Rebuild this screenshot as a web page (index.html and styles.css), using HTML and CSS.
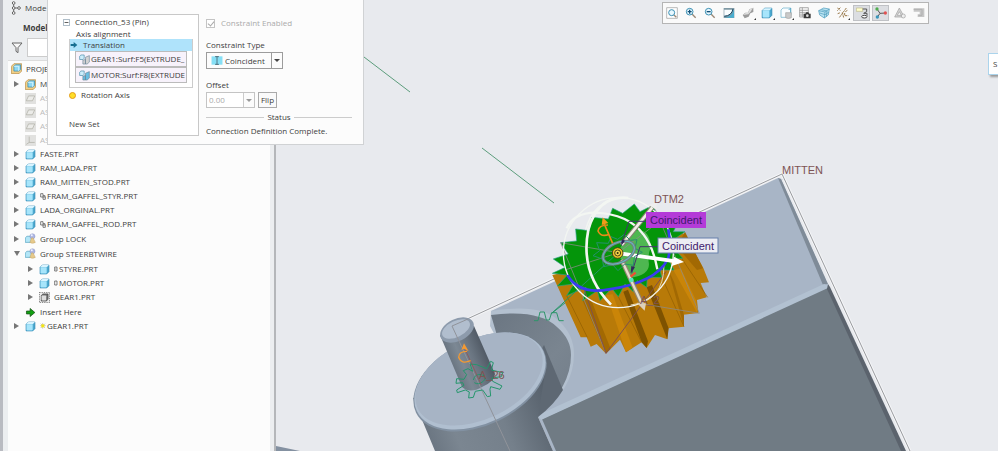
FILE: index.html
```
<!DOCTYPE html>
<html lang="en">
<head>
    <meta charset="utf-8">
    <title>Assembly - Component Placement</title>
    <link rel="stylesheet" href="styles.css">
</head>

<body>
<!-- Shared icons -->
<svg class="defs" aria-hidden="true">
    <symbol id="part" viewBox="0 0 30 30">
        <path d="M3 9l6-6h18v18l-6 6H3z" fill="#4ba9cf" stroke="#2b86b3" stroke-width="2"/>
        <path d="M3 9l6-6h18l-6 6z" fill="#d9f4ff"/>
        <rect x="4" y="9" width="17" height="17" rx="2" fill="#a7e5fb"/>
    </symbol>
    <symbol id="asm" viewBox="0 0 30 30">
        <path d="M1 9l7-7h21v20l-7 7H1z" fill="#f2cf86" stroke="#b78d48" stroke-width="2"/>
        <path d="M8 9l4-4h14v13l-4 4H8z" fill="#8fd8f3" stroke="#3588ad" stroke-width="2"/>
        <path d="M8 9h13v13" fill="none" stroke="#e9fbff" stroke-width="2"/>
    </symbol>
    <symbol id="group" viewBox="0 0 34 34">
        <path d="M1 15l5-5h14v14l-4 5H1z" fill="#b3e6f7" stroke="#4d9fbd" stroke-width="2"/>
        <circle cx="23" cy="10" r="8" fill="#aeb7e4" stroke="#7781b3"/>
        <circle cx="21" cy="7" r="3" fill="#eef1ff"/>
        <path d="M20 15h5l7 14q-9 6-17 0z" fill="#e6c98b" stroke="#b08f4e"/>
    </symbol>
    <symbol id="plane" viewBox="0 0 34 34">
        <rect width="34" height="34" fill="#e1e1df"/>
        <path d="M11 9h19l-7 15H4z" fill="#ebebe8" stroke="#aaa99f" stroke-width="2"/>
    </symbol>
    <symbol id="csys" viewBox="0 0 34 34">
        <rect width="34" height="34" fill="#e1e1df"/>
        <path d="M13 5v18h17M13 23l-9 6" fill="none" stroke="#aaa99f" stroke-width="2"/>
    </symbol>
    <symbol id="ghost" viewBox="0 0 34 34">
        <rect x="1" y="1" width="32" height="32" fill="#eee" stroke="#333" stroke-width="2" stroke-dasharray="4 3"/>
        <path d="M7 11l5-5h16v16l-5 6H7z" fill="#777" stroke="#333" stroke-width="2"/>
        <rect x="8" y="11" width="14" height="15" rx="2" fill="#ddd"/>
    </symbol>
    <symbol id="surf" viewBox="0 0 34 32">
        <path d="M2 6l4-4h10v10l-4 4H2z" fill="#cdeefb" stroke="#4387a5" stroke-width="2"/>
        <path d="M12 18l8-2v14h-8zM20 9l12-5v20l-7 6h-5z" fill="currentColor" stroke="#6d8898" stroke-width="2"/>
    </symbol>
    <symbol id="zoomer" viewBox="0 0 36 36">
        <path d="M21 21l11 11" stroke="#9a8775" stroke-width="4"/>
        <circle cx="14" cy="14" r="10" fill="#e8f8ff" stroke="#3b8fb3" stroke-width="3"/>
    </symbol>
</svg>

<aside class="sidebar">
    <header class="side-head">
        <div class="tab">
            <svg class="tab-icon" viewBox="0 0 30 42" fill="#fff" stroke="#666" stroke-width="3">
                <path d="M8 6v30M8 21h14"/>
                <circle cx="8" cy="6" r="4"/><circle cx="8" cy="21" r="4"/><circle cx="8" cy="36" r="4"/><circle cx="24" cy="21" r="4"/>
            </svg>
            <span>Mode</span>
        </div>
        <h2>Model</h2>
        <div class="filter">
            <svg class="funnel" viewBox="0 0 34 36"><path d="M2 3h30L20 17v15l-6-4V17z" fill="#f7f7f7" stroke="#666" stroke-width="3"/></svg>
            <input type="text" aria-label="Filter">
        </div>
    </header>
    <ul class="tree">
        <li><div class="row root"><svg class="ico"><use href="#asm"/></svg><span>PROJE</span></div>
            <ul>
                <li><div class="row"><i class="tri"></i><svg class="ico"><use href="#asm"/></svg><span>M</span></div></li>
                <li><div class="row dim"><i class="tri none"></i><svg class="ico"><use href="#plane"/></svg><span>AS</span></div></li>
                <li><div class="row dim"><i class="tri none"></i><svg class="ico"><use href="#plane"/></svg><span>AS</span></div></li>
                <li><div class="row dim"><i class="tri none"></i><svg class="ico"><use href="#plane"/></svg><span>AS</span></div></li>
                <li><div class="row dim"><i class="tri none"></i><svg class="ico"><use href="#csys"/></svg><span>AS</span></div></li>
                <li><div class="row"><i class="tri"></i><svg class="ico"><use href="#part"/></svg><span>FASTE.PRT</span></div></li>
                <li><div class="row"><i class="tri"></i><svg class="ico"><use href="#part"/></svg><span>RAM_LADA.PRT</span></div></li>
                <li><div class="row"><i class="tri"></i><svg class="ico"><use href="#part"/></svg><span>RAM_MITTEN_STOD.PRT</span></div></li>
                <li><div class="row"><i class="tri"></i><svg class="ico"><use href="#part"/></svg><svg class="mark" viewBox="0 0 18 21"><path d="M2 2h7v10H2zM9 8h6v4M9 12h7v7H9z" fill="none" stroke="#444" stroke-width="2"/></svg><span>FRAM_GAFFEL_STYR.PRT</span></div></li>
                <li><div class="row"><i class="tri"></i><svg class="ico"><use href="#part"/></svg><span>LADA_ORGINAL.PRT</span></div></li>
                <li><div class="row"><i class="tri"></i><svg class="ico"><use href="#part"/></svg><svg class="mark" viewBox="0 0 18 21"><path d="M2 2h7v10H2zM9 8h6v4M9 12h7v7H9z" fill="none" stroke="#444" stroke-width="2"/></svg><span>FRAM_GAFFEL_ROD.PRT</span></div></li>
                <li><div class="row group"><i class="tri"></i><svg class="ico"><use href="#group"/></svg><span>Group LOCK</span></div></li>
                <li><div class="row group"><i class="tri open"></i><svg class="ico"><use href="#group"/></svg><span>Group STEERBTWIRE</span></div>
                    <ul>
                        <li><div class="row"><i class="tri"></i><svg class="ico"><use href="#part"/></svg><svg class="mark slim" viewBox="0 0 12 21"><path d="M2 3h7v12H2zM4 9h3" fill="none" stroke="#444" stroke-width="2"/></svg><span>STYRE.PRT</span></div></li>
                        <li><div class="row"><i class="tri"></i><svg class="ico"><use href="#part"/></svg><svg class="mark slim" viewBox="0 0 12 21"><path d="M2 3h7v12H2z" fill="none" stroke="#444" stroke-width="2"/></svg><span>MOTOR.PRT</span></div></li>
                        <li><div class="row"><i class="tri"></i><svg class="ico"><use href="#ghost"/></svg><span>GEAR1.PRT</span></div></li>
                    </ul>
                </li>
                <li><div class="row"><i class="tri none"></i><svg class="ico" viewBox="0 0 30 30"><path d="M4 11h10V4l13 11-13 11v-7H4z" fill="#12a012" stroke="#184e18" stroke-width="2"/></svg><span>Insert Here</span></div></li>
                <li><div class="row"><i class="tri"></i><svg class="ico"><use href="#part"/></svg><svg class="mark" viewBox="0 0 18 21"><path d="M8 0v17M0 8h17M2 2l13 13M15 2L2 15" stroke="#666" stroke-width="1"/><rect x="4" y="4" width="9" height="9" fill="#f4e610"/></svg><span>GEAR1.PRT</span></div></li>
            </ul>
        </li>
    </ul>
</aside>

<main class="viewport">
    <svg class="scene" viewBox="276 0 722 451" preserveAspectRatio="xMidYMid slice">
        <defs>
            <linearGradient id="cyl" gradientUnits="userSpaceOnUse" x1="415" y1="425" x2="545" y2="375">
                <stop offset="0" stop-color="#66717d"/><stop offset=".25" stop-color="#7b8691"/><stop offset=".6" stop-color="#75808b"/><stop offset="1" stop-color="#545e69"/>
            </linearGradient>
            <linearGradient id="pin" gradientUnits="userSpaceOnUse" x1="447" y1="364" x2="486" y2="348">
                <stop offset="0" stop-color="#626d79"/><stop offset=".35" stop-color="#7c8894"/><stop offset=".65" stop-color="#6a7581"/><stop offset="1" stop-color="#4d5661"/>
            </linearGradient>
            <linearGradient id="pocket" x1="0" y1="0" x2="1" y2="1">
                <stop offset="0" stop-color="#6b7682"/><stop offset=".6" stop-color="#7a8590"/><stop offset="1" stop-color="#727d89"/>
            </linearGradient>
        </defs>

        <path d="M276 446l24 5h-24z" fill="#8491a1"/>
        <path d="M364 57l46 35M482 148l72 55" stroke="#5c9d7c" fill="none"/>

        <!-- Frame block -->
        <path d="M491 311L778 178l7 2 45 106L910 451H553L538 417l-47-102z" fill="#a8b5c6"/>
        <path d="M785 180l125 271h-6L828 285l-47-106z" fill="#e8eaee"/>
        <path d="M778 178l3 1 47 105-5 1z" fill="#7f8b98"/>
        <path d="M542 419L828 287l76 164H556z" fill="#707b84"/>
        <path d="M538 415L824 284l4 1v3L541 420z" fill="#b2c1d1"/>
        <path d="M828 284l2 3 76 164h-5L827 289z" fill="#5b636d"/>
        <path d="M452 326L782 174l128 277" fill="none" stroke="#fff" stroke-width="3" opacity=".5"/>
        <path d="M452 326L782 174l128 277" fill="none" stroke="#999b9f"/>

        <!-- Pocket -->
        <path d="M491 311q50-8 68 10 15 14 15 33 0 35-36 62l-48-90z" fill="#b3c0cf"/>
        <path d="M491 315q48-6 66 12 14 12 14 28 0 32-33 61l-35-60z" fill="url(#pocket)"/>
        <path d="M544 345l19 45q-9 15-25 27l-20-26z" fill="#5e6873"/>

        <!-- Hub -->
        <path d="M413 398l22 53h118L538 417l9-57-66 20z" fill="url(#cyl)"/>
        <ellipse cx="480" cy="382" rx="71" ry="43" transform="rotate(-25.7 480 382)" fill="#8291a2"/>
        <ellipse cx="480" cy="381" rx="70" ry="42" transform="rotate(-25.7 480 381)" fill="#b0bfd0"/>
        <ellipse cx="479" cy="379" rx="68" ry="40" transform="rotate(-25.7 479 379)" fill="#a7b4c5"/>

        <!-- Pin -->
        <path d="M440 335l22 52q8 7 20 0 12-5 13-13L474 326z" fill="url(#pin)"/>
        <ellipse cx="457" cy="330" rx="18" ry="11" transform="rotate(-25.7 457 330)" fill="#8d9bac"/>
        <ellipse cx="456" cy="329" rx="15" ry="8" transform="rotate(-25.7 456 329)" fill="#b1bece"/>
        <path d="M452 326l58 125M452 326l16-7" fill="none" stroke="#90939a"/>

        <g transform="translate(400 290) scale(.3333)" fill="none">
            <path d="M402 92h12l6-26h13l6 24h9l7-22h15l7 24h14M455 70L545 0" stroke="#2e966a" stroke-width="3"/>
            <path d="M210 222l20 2 30 12 12-22 8 4-6 22 34 8-4 12-28 4 2 10 28 14-6 10-28-8-2 8 2 20-10 2-14-20-22 4-6 18-14 2 2-18-12-6-24 8-2-8 22-14-4-8-20 2 2-14 22 2 8-14-10-12 14-6 14 8z" stroke="#24966b" stroke-width="3"/>
            <path d="M220 270q5-20 25-16 20 5 5 20-15 12-27 4" stroke="#24966b" stroke-width="3"/>
            <path d="M192 170l52 115" stroke="#9a4c4c" stroke-width="2"/>
            <path d="M212 212q-28 12-36-10 0-18 25-18" stroke="#f49a32" stroke-width="4"/>
            <path d="M192 160l-8 20 8-4 14 8z" fill="#f49a32"/>
        </g>
        <text class="tag" x="479" y="379">A_26</text>
        <text class="tag" x="782" y="174">MITTEN</text>

        <!-- Gear, drawn at three times its size -->
        <g transform="translate(540 180) scale(.3333)">
            <path d="M37 285L122 472l18 0 12 28 18-8 28 29 42-42 18 38 47-30 15 17 25-39 37 13 3-33 47-5-2-36 45-5-4-39 29-8-18-43 25-2-17-43-8-15-55-94-80 60z" fill="#b87a08"/>
            <path d="M128 362l70 158 14-14-60-150zM385 270l47 170 0-35-30-100zM435 155l54 110-18 5-60-70z" fill="#a26903"/>
            <path d="M250 335l55 152 15 17 4-20-60-155zM320 322l62 156 4-33-50-130z" fill="#7e5200"/>
            <path d="M200 345l58 172 20-14-60-160zM400 270l72 130-4-39-45-95z" fill="#ca8508"/>
            <path d="M80 347l62 125M235 350l70 137M365 290l67 150M425 235l78 117" stroke="#8f5d02" stroke-width="2"/>
            <path d="M62 188L110 183 107 147 148 152 155 112 205 117 218 85 248 100 283 72 300 95 340 75 348 103 388 98 385 130 410 135 400 155 435 155 402 178 440 192 400 203 428 235 385 238 402 270 360 270 365 292 322 292 320 322 292 302 280 335 255 312 235 350 215 325 180 362 172 332 128 362 138 322 80 347 102 312 52 318 82 285 37 280 76 262 40 237 85 222Z" fill="#04950a" stroke="#27a387" stroke-width="2"/>
            <path d="M265 160q60-30 68 40-10 25-7 45 8 40-55 48l-38-75z" fill="#80cf80" opacity=".6"/>
            <path d="M62 188l173 30M75 270l160-52L390 100M340 75l138 325-180-30M62 188l136 332" stroke="#8c8c8c" stroke-width="3" fill="none" opacity=".75"/>
            <path d="M130 320l68 200 180-245" stroke="#81504c" stroke-width="3" fill="none"/>
            <path d="M35 400L235 218" stroke="#259566" stroke-width="3"/>

            <g fill="none" stroke="#f3f6f2">
                <circle cx="235" cy="218" r="165" stroke-width="4"/>
                <path d="M265 54q-90-10-120 95-26 130 68 225" stroke-width="8"/>
                <path d="M240 54q-80 10-103 95" stroke-width="4"/>
                <path d="M80 145q20-46 85-47 100 4 145 65 30 38 42 105" stroke-width="7"/>
                <path d="M372 255q0 110-100 120" stroke-width="3" stroke="#e5d7b0"/>
            </g>
            <path d="M82 285q35 60 125 43 140-20 176-90 12-30 2-90" fill="none" stroke="#3b3df0" stroke-width="8"/>

            <path d="M245 195L337 82" stroke="#857f70" stroke-width="14"/>
            <path d="M245 195L337 82" stroke="#f2f0e8" stroke-width="8"/>
            <path d="M240 220l168 24" stroke="#fff" stroke-width="11"/>
            <path d="M402 230l30 16-37 12z" fill="#fff"/>
            <path d="M245 240l60 130" stroke="#928572" stroke-width="14"/>
            <path d="M245 240l60 130" stroke="#e5ddcb" stroke-width="7"/>
            <path d="M290 368l28 2-4 22z" fill="#ddd1ba"/>
            <path d="M325 75l26-8-2 22z" fill="#eee"/>

            <g fill="none">
                <path d="M170 188l35 2 8-20 20 8 20-15 18 18 20-2-6 26 22 12-24 13-3 26-26-4-20 20-16-18-27 6-4-23-28-10 20-15z" stroke="#26906b" stroke-width="3"/>
                <ellipse cx="236" cy="218" rx="50" ry="30" transform="rotate(-25 236 218)" stroke="#777b80" stroke-width="9"/>
                <ellipse cx="236" cy="218" rx="50" ry="30" transform="rotate(-25 236 218)" stroke="#62bec5" stroke-width="3"/>
                <path d="M245 190l22-66h60M275 280l25-80h55" stroke="#423769" stroke-width="3"/>
                <path d="M272 280l2-22 11 4zM243 198l3-20 9 4z" fill="#31255b"/>
                <path d="M218 190l-26-60M208 163q-25 10-34-10 2-18 30-18" stroke="#e78b19" stroke-width="5"/>
                <path d="M188 112l-3 23 20-6z" fill="#f19b19"/>
            </g>
            <path d="M272 290l15-12" stroke="#f24c32" stroke-width="7"/>
            <circle cx="274" cy="300" r="7" fill="#58e5c0"/>
            <circle cx="233" cy="219" r="16" fill="#f1c72d" stroke="#4e4415" stroke-width="3"/>
            <circle cx="233" cy="219" r="9" fill="#f6d54a" stroke="#4e4415" stroke-width="3"/>
            <circle cx="233" cy="219" r="3" fill="#332c0c"/>
        </g>
        <text class="tag" x="640" y="304">A_2</text>
        <text class="tag" x="654" y="203">DTM2</text>
        <rect x="646" y="212" width="60" height="16" fill="#b43bd8"/>
        <text class="callout" x="650" y="224">Coincident</text>
        <rect x="658" y="238" width="60" height="15" fill="#ecedf3" stroke="#6780ab"/>
        <text class="callout" x="662" y="250">Coincident</text>
    </svg>

    <div class="toolbar" role="toolbar">
        <button aria-label="Refit"><svg viewBox="0 0 36 36"><path d="M2 2h32v32H2z" fill="#fff" stroke="#9a9a9a" stroke-width="2"/><path d="M23 23l8 8" stroke="#9a8775" stroke-width="4"/><circle cx="17" cy="17" r="9" fill="#e8f8ff" stroke="#3b8fb3" stroke-width="3"/></svg></button>
        <button aria-label="Zoom In"><svg viewBox="0 0 36 36"><use href="#zoomer"/><path d="M8 14h12M14 8v12" stroke="#124f77" stroke-width="4"/></svg></button>
        <button aria-label="Zoom Out"><svg viewBox="0 0 36 36"><use href="#zoomer"/><path d="M8 14h12" stroke="#124f77" stroke-width="4"/></svg></button>
        <button aria-label="Repaint"><svg viewBox="0 0 36 36"><path d="M2 3h32v30H2z" fill="#7f99a5"/><path d="M4 8h25q-3 18-25 18z" fill="#f9fdff"/><path d="M4 32q24-1 29-25v25z" fill="#48aed0"/><path d="M4 28q22-2 26-22" fill="none" stroke="#174b68" stroke-width="3"/></svg></button>
        <button class="more" aria-label="Rendering"><svg viewBox="0 0 36 36"><path d="M2 24l8-7h8l4-10 12-5v13l-9 4-5 10-12 5z" fill="#9b9b9b"/><path d="M3 24l8-6h7l5-11 10-5-7 12-7 8z" fill="#dedede"/></svg></button>
        <button class="more" aria-label="Display Style"><svg viewBox="0 0 30 30"><use href="#part"/></svg></button>
        <button class="more" aria-label="Saved Orientations"><svg viewBox="0 0 36 36"><path d="M3 9l6-6h23v22l-6 6H3z" fill="#f9fdff" stroke="#62acc9" stroke-width="2"/><path d="M26 9l6-6v22" fill="none" stroke="#62acc9" stroke-width="3"/><path d="M17 17h17v15q-9 5-17 0z" fill="#c9c9c9" stroke="#a3a3a3" stroke-width="2"/></svg></button>
        <button aria-label="View Manager"><svg viewBox="0 0 36 36"><path d="M2 2h26v28H2zM2 10h26M2 17h26M2 24h16M10 2v28" fill="#f6f6f6" stroke="#8a8a8a" stroke-width="2"/><path d="M14 20h5l3-4h6l3 4h4v14H14z" fill="#383838"/><circle cx="25" cy="26" r="4" fill="#ddd"/></svg></button>
        <button aria-label="Perspective"><svg viewBox="0 0 36 36"><path d="M2 11L17 3l17 3-3 18-12 9L5 24z" fill="#b9e2f1" stroke="#4a9abb" stroke-width="2"/><path d="M2 11l19 4 13-9M21 15l-2 18M10 8l17 4-2 17M5 18l16 5 11-7" fill="none" stroke="#4a9abb" stroke-width="2"/></svg></button>
        <button class="more" aria-label="Datum Display"><svg viewBox="0 0 36 36"><path d="M1 2l9 9M10 2l-9 9M28 3L6 33M16 16l4 16M23 18v8h11M25 14l8-5M2 20l8-3" fill="none" stroke="#98784a" stroke-width="3" stroke-dasharray="7 2"/></svg></button>
        <button class="on" aria-label="Annotation Display" aria-pressed="true"><svg viewBox="0 0 36 36"><path d="M1 3h19v10H1z" fill="#ffffce" stroke="#bbb78a" stroke-width="2"/><path d="M20 6h12v8l-9 5h10v7" fill="none" stroke="#555" stroke-width="3"/><ellipse cx="25" cy="29" rx="8" ry="4" fill="#fff" stroke="#444" stroke-width="3"/></svg></button>
        <button class="on" aria-label="Spin Center" aria-pressed="true"><svg viewBox="0 0 36 36"><path d="M6 6l9 13 17-1M15 19L7 30" fill="none" stroke="#555" stroke-width="3"/><circle cx="6" cy="6" r="5" fill="#4eac4e"/><circle cx="31" cy="18" r="5" fill="#e05353"/><circle cx="7" cy="30" r="5" fill="#3996bb"/></svg></button>
        <button aria-label="Simulate" disabled><svg viewBox="0 0 36 36"><path d="M16 3l15 27H2zM16 14l-6 11h12z" fill="#d4d4d4" stroke="#9f9f9f" stroke-width="2"/><circle cx="28" cy="27" r="6" fill="#eee" stroke="#9f9f9f" stroke-width="2"/></svg></button>
        <button aria-label="Live Section" disabled><svg viewBox="0 0 36 36"><path d="M2 4h32v26H14v-8h6v-8H2z" fill="#c6c6c6"/><path d="M2 7h25v18H16" fill="none" stroke="#b0b0b0" stroke-width="3"/></svg></button>
    </div>
    <div class="tip">S</div>
</main>

<form class="dialog">
    <section class="sets">
        <div class="set-name"><svg class="minus" viewBox="0 0 18 18"><path d="M1 1h16v16H1z" fill="#fff" stroke="#8ba0af" stroke-width="2"/><path d="M4 9h10" stroke="#333" stroke-width="2"/></svg>Connection_53 (Pin)</div>
        <div class="axis">Axis alignment</div>
        <div class="translation">
            <div class="selected"><svg class="arrow" viewBox="0 0 24 24"><path d="M2 9h9V3l11 9-11 9v-6H2z" fill="#176f92"/></svg>Translation</div>
            <div class="refs">
                <div class="ref"><svg class="surf grey"><use href="#surf"/></svg><span>GEAR1:Surf:F5(EXTRUDE_</span></div>
                <div class="ref"><svg class="surf"><use href="#surf"/></svg><span>MOTOR:Surf:F8(EXTRUDE</span></div>
            </div>
        </div>
        <div class="rotation"><i class="dot"></i>Rotation Axis</div>
        <div class="new-set">New Set</div>
    </section>
    <section class="constraint">
        <label class="check"><input type="checkbox" checked disabled>Constraint Enabled</label>
        <label class="caption" for="ctype">Constraint Type</label>
        <div class="combo">
            <svg class="coin" viewBox="0 0 36 28"><path d="M1 1h34v26H1z" fill="#86dff5"/><path d="M18 0v28M12 2h12M12 26h12" stroke="#4d7380" stroke-width="3"/></svg>
            <select id="ctype"><option>Coincident</option></select>
            <i class="drop"></i>
        </div>
        <label class="caption" for="offset">Offset</label>
        <div class="offset">
            <div class="value"><input id="offset" type="text" value="0.00" disabled><i class="drop"></i></div>
            <button type="button">Flip</button>
        </div>
        <div class="status-title">Status</div>
        <div class="status">Connection Definition Complete.</div>
    </section>
</form>
</body>
</html>
```
FILE: styles.css
```
* {
    box-sizing: border-box;
}

body {
    margin: 0;
    display: flex;
    height: 100vh;
    position: relative;
    overflow: hidden;
    background-color: #e8eaee;
    color: #3c3c3c;
    font: 8px/14px "Open Sans", "Noto Sans", sans-serif;
}

input, button, select {
    font: inherit;
    color: inherit;
    margin: 0;
    padding: 0;
}

.defs {
    position: absolute;
    width: 0;
    height: 0;
}

/* Model tree */
.sidebar {
    flex: none;
    width: 276px;
    padding-left: 5px;
    padding-right: 4px;
    border-left: 3px solid #b9bbc1;
    border-right: 2px solid #b5b7ba;
    background-color: #eceef0;
    display: flex;
    flex-direction: column;
}

.side-head {
    height: 61px;
    padding-left: 3px;
    border-bottom: 1px solid #ddd;
}

.tab {
    display: flex;
    align-items: center;
    gap: 4px;
    height: 15px;
}

.tab-icon {
    width: 10px;
    height: 14px;
}

.side-head h2 {
    margin: 6px 0 3px 12px;
    font-size: 8px;
    line-height: 14px;
}

.filter {
    display: flex;
    align-items: center;
    gap: 4px;
}

.funnel {
    width: 12px;
    height: 12px;
}

.filter input {
    flex: 1;
    height: 19px;
    border: 1px solid #ccc;
    background-color: #fff;
}

.tree {
    flex: 1;
    background-color: #fcfcfc;
}

.tree, .tree ul {
    list-style: none;
    margin: 0;
    padding: 0;
}

.tree ul {
    padding: 1px 0;
}

.tree ul ul {
    padding-left: 14px;
}

.row {
    display: flex;
    align-items: center;
    height: 14px;
    padding-left: 6px;
    white-space: nowrap;
}

.row.root {
    height: 15px;
    padding-left: 3px;
}

.row.group {
    height: 15px;
}

.row.dim {
    color: #bbb;
}

.ico {
    width: 11px;
    height: 11px;
    margin-right: 4px;
}

.mark {
    width: 6px;
    height: 7px;
    margin-right: 1px;
}

.mark.slim {
    width: 4px;
}

.tri {
    width: 6px;
    margin-right: 5px;
    border-left: 5px solid #777;
    border-top: 3px solid transparent;
    border-bottom: 3px solid transparent;
}

.tri.open {
    border-left: 3px solid transparent;
    border-right: 3px solid transparent;
    border-top: 5px solid #777;
    border-bottom: 0;
}

.tri.none {
    border-color: transparent;
}

/* Graphics area */
.viewport {
    flex: 1;
    min-width: 0;
    position: relative;
}

.scene {
    display: block;
    width: 100%;
    height: 100%;
}

.tag {
    font: 11px "Liberation Sans", Arial, sans-serif;
    fill: #7d5454;
}

.callout {
    font: 11px "Liberation Sans", Arial, sans-serif;
    fill: #3f1a6b;
}

.toolbar {
    position: absolute;
    top: 2px;
    right: 69px;
    width: 267px;
    height: 22px;
    padding: 2px 1px;
    display: grid;
    grid-template-columns: repeat(14, 1fr);
    gap: 2px;
    background-color: #fafafa;
    border: 1px solid #b5b5b5;
}

.toolbar button {
    position: relative;
    display: flex;
    align-items: center;
    justify-content: center;
    border: 1px solid transparent;
    background: none;
}

.toolbar svg {
    flex: none;
    width: 12px;
    height: 12px;
}

.toolbar .on {
    background-color: #dcdee2;
    border-color: #bfc1c5;
}

.toolbar .more::after {
    content: "";
    position: absolute;
    right: 0;
    bottom: 0;
    border-left: 2px solid transparent;
    border-bottom: 2px solid #333;
}

.tip {
    position: absolute;
    top: 53px;
    right: 0;
    width: 10px;
    height: 22px;
    padding-left: 4px;
    line-height: 20px;
    background-color: #fff;
    border: 1px solid #abd4ec;
    border-right: 0;
    box-shadow: 2px 2px 2px #999;
}

/* Placement dialog */
.dialog {
    position: absolute;
    top: 0;
    left: 47px;
    width: 317px;
    padding: 14px 11px 6px 8px;
    display: flex;
    gap: 5px;
    background-color: #fcfcfc;
    border: 1px solid #d0d2d4;
    border-top: 0;
}

.sets {
    width: 143px;
    height: 122px;
    padding: 1px 5px 0 12px;
    border: 1px solid #c8c8c8;
    background-color: #fff;
    line-height: 12px;
}

.set-name {
    display: flex;
    align-items: center;
    gap: 5px;
    margin-left: -6px;
}

.minus {
    width: 7px;
    height: 7px;
}

.axis {
    padding-left: 7px;
    line-height: 11px;
}

.translation {
    height: 49px;
    border: 1px solid #ccc;
    border-top: 0;
}

.selected {
    display: flex;
    align-items: center;
    gap: 5px;
    background-color: #afe3fb;
}

.arrow {
    width: 8px;
    height: 8px;
}

.refs {
    margin: 0 5px;
}

.ref {
    display: flex;
    align-items: center;
    gap: 1px;
    height: 16px;
    padding-left: 3px;
    white-space: nowrap;
    background-color: #f7f2fb;
    border: 1px solid #bbb;
}

.surf {
    flex: none;
    width: 11px;
    height: 11px;
    color: #69bfe2;
}

.surf.grey {
    color: #d3d3d3;
}

.rotation {
    display: flex;
    align-items: center;
    gap: 5px;
    margin-top: 1px;
}

.dot {
    width: 7px;
    height: 7px;
    border: 1px solid #e49b18;
    border-radius: 50%;
    background-color: #ffdf28;
}

.new-set {
    margin-top: 17px;
}

.constraint {
    flex: 1;
    display: flex;
    flex-direction: column;
    align-items: flex-start;
    padding: 2px 0 0 2px;
}

.check {
    display: flex;
    align-items: center;
    gap: 6px;
    color: #aaa;
}

.check input {
    appearance: none;
    width: 9px;
    height: 9px;
    border: 1px solid #c4c4c4;
    background-color: #fff;
}

.check input::before {
    content: "";
    display: block;
    width: 3px;
    height: 5px;
    margin: 0 2px;
    border: solid #aaa;
    border-width: 0 1px 1px 0;
    transform: rotate(40deg);
}

.caption {
    margin-top: 8px;
}

.combo {
    display: flex;
    align-items: center;
    width: 77px;
    height: 17px;
    padding-left: 4px;
    border: 1px solid #9c9c9c;
}

.coin {
    width: 12px;
    height: 9px;
    margin-right: 2px;
}

.combo select {
    flex: 1;
    min-width: 0;
    height: 15px;
    appearance: none;
    border: 0;
    background: none;
}

.drop {
    display: flex;
    align-self: stretch;
    align-items: center;
    justify-content: center;
    width: 11px;
    border-left: 1px solid #9c9c9c;
}

.drop::before {
    content: "";
    border: 3px solid transparent;
    border-top-color: #444;
    border-bottom: 0;
}

.offset {
    display: flex;
    gap: 3px;
}

.value {
    display: flex;
    width: 49px;
    height: 16px;
    border: 1px solid #c4c4c4;
}

.value input {
    flex: 1;
    min-width: 0;
    padding-left: 2px;
    border: 0;
    background-color: #fff;
    color: #aaa;
}

.value .drop {
    border-color: #ccc;
}

.value .drop::before {
    border-top-color: #999;
}

.offset button {
    width: 19px;
    border: 1px solid #aaa;
    background-color: #fafafa;
}

.combo + .caption {
    margin-top: 9px;
}

.status-title {
    align-self: stretch;
    display: flex;
    align-items: center;
    gap: 3px;
    margin-top: 2px;
}

.status-title::before, .status-title::after {
    content: "";
    flex: 1;
    border-top: 1px solid #ccc;
}
```
